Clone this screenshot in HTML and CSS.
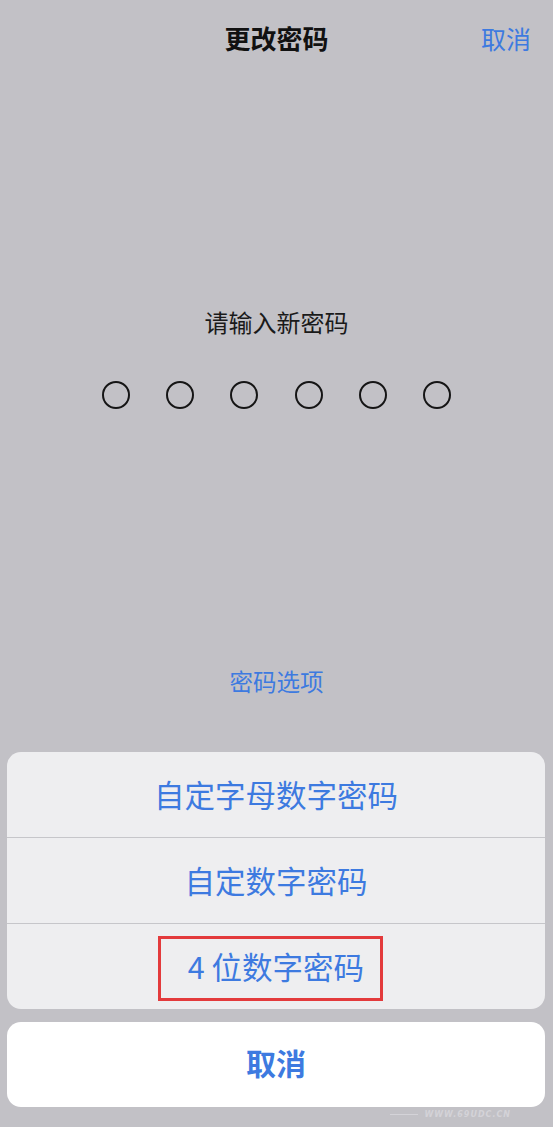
FILE: index.html
```html
<!DOCTYPE html>
<html lang="zh">
<head>
    <meta charset="UTF-8">
    <meta name="viewport" content="width=device-width, initial-scale=1.0">
    <title>更改密码</title>
    <link rel="stylesheet" href="styles.css">
</head>
<body>

    <div class="header">
        <h2 class="title">更改密码</h2>
        <span class="cancel-link">取消</span>
    </div>

    <div class="prompt">请输入新密码</div>

    <div class="dots">
        <span class="dot"></span>
        <span class="dot"></span>
        <span class="dot"></span>
        <span class="dot"></span>
        <span class="dot"></span>
        <span class="dot"></span>
    </div>

    <div class="options-link">密码选项</div>

    <!-- 密码选项菜单 -->
    <div class="sheet">
        <div class="sheet-item">自定字母数字密码</div>
        <div class="sheet-item">自定数字密码</div>
        <div class="sheet-item">4 位数字密码<span class="mark"></span></div>
    </div>

    <div class="sheet-cancel">取消</div>

    <div class="watermark"><span class="wm-line"></span>WWW.69UDC.CN</div>

</body>
</html>
```

FILE: styles.css
```css
body { margin: 0; height: 1127px; background: #c2c1c6; font-family: "Noto Sans CJK SC", "Noto Sans", sans-serif; color: #111; overflow: hidden; }

.header { position: relative; height: 80px; display: flex; align-items: center; justify-content: center; }
.title { margin: 0 0 4px; font-size: 26px; font-weight: 700; line-height: 32px; }
.cancel-link { position: absolute; right: 22px; top: 22px; font-size: 25px; line-height: 32px; color: #3d7ae0; }

.prompt { margin-top: 226px; text-align: center; font-size: 24px; line-height: 32px; color: #1a1a1a; }

.dots { margin-top: 43px; display: flex; justify-content: center; gap: 36.4px; }
.dot { width: 24px; height: 24px; border: 2px solid #151515; border-radius: 50%; }

.options-link { margin-top: 256px; text-align: center; font-size: 23.5px; line-height: 32px; color: #3d7ae0; }

.sheet { margin: 55px 8px 0 7px; background: #eeeef0; border-radius: 14px; overflow: hidden; }
.sheet-item { position: relative; height: 86px; display: flex; align-items: center; justify-content: center; padding-bottom: 2px; box-sizing: border-box; font-size: 30.5px; color: #3d7ae0; border-top: 1px solid #c6c6ca; }
.sheet-item:first-child { height: 85px; border-top: none; }
.mark { position: absolute; left: 151px; top: 12px; width: 225px; height: 65px; box-sizing: border-box; border: 3px solid #e33a3c; }

.sheet-cancel { margin: 13px 8px 0 7px; height: 85px; padding-bottom: 5px; box-sizing: border-box; background: #fff; border-radius: 14px; display: flex; align-items: center; justify-content: center; font-size: 30px; font-weight: 700; color: #3d7ae0; }

.watermark { display: flex; align-items: center; justify-content: flex-end; gap: 6px; padding-right: 42px; margin-top: 3px; font-family: "DejaVu Sans", sans-serif; font-size: 8px; font-weight: 700; font-style: italic; letter-spacing: 1px; color: #d4d3d8; }
.wm-line { width: 28px; height: 1px; background: #d4d3d8; }
```
